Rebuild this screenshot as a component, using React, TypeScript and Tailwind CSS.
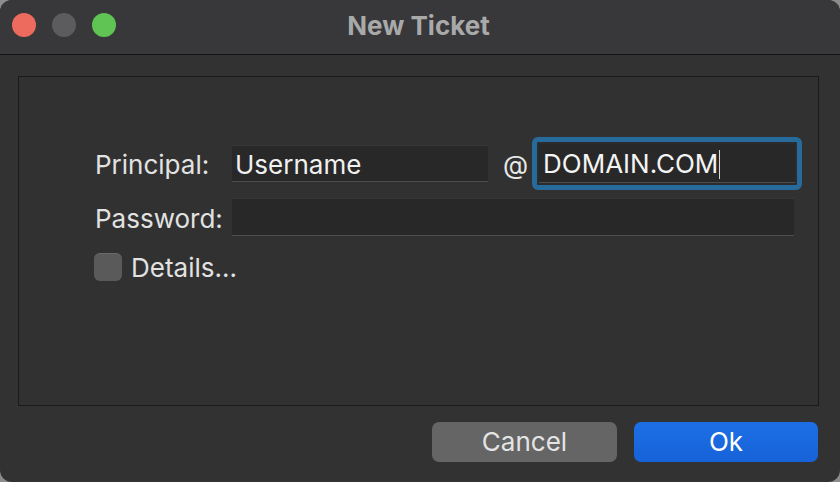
import React from "react";

const font = { fontFamily: "Inter, 'Noto Sans', sans-serif" };

export default function App() {
  return (
    <div className="w-[840px] h-[482px] bg-[#8c8c8c]" style={font}>
      <div className="w-[840px] h-[482px] rounded-[12px] overflow-hidden bg-[#323232] flex flex-col">
        {/* title bar */}
        <div className="h-[55px] shrink-0 bg-[#38383a] border-b border-[#141414] grid grid-cols-[1fr_auto_1fr] items-center pb-[3px]">
          <div className="flex gap-[16px] pl-[12px] -mt-[1px]">
            <span className="w-[24px] h-[24px] rounded-full bg-[#ed6a5e]" />
            <span className="w-[24px] h-[24px] rounded-full bg-[#5c5c5e]" />
            <span className="w-[24px] h-[24px] rounded-full bg-[#5fc454]" />
          </div>
          <div className="text-[26px] leading-[30px] font-bold text-[#a9a9aa] -ml-[3px]">New Ticket</div>
          <div />
        </div>

        {/* body */}
        <div className="flex-1 flex flex-col pl-[18px] pt-[21px]">
          <div className="w-[801px] h-[330px] border border-[#1a1a1a] bg-[#313131] pl-[76px] pt-[60px] text-[26px] leading-[30px] text-[#e2e2e2]">
            <div className="flex items-center">
              <div className="w-[137px] pt-[3px]">Principal:</div>
              <div className="w-[256px] h-[37px] bg-[#282828] border-t border-[#363636] border-b border-b-[#4d4d4d] pl-[3px] pt-[2px] flex items-center text-[#f0f0f0]">
                Username
              </div>
              <div className="ml-[15px] w-[22px] pt-[3px] text-[#e8e8e8]">@</div>
              <div className="ml-[7px] p-[2px] border-[5px] border-[#266b9c] rounded-[6px] bg-[#2c2c2c]">
                <div className="w-[256px] h-[39px] bg-[#282828] border-b border-[#4d4d4d] pl-[4px] pt-[2px] flex items-center text-[#f4f4f4]">
                  DOMAIN.COM
                  <span className="inline-block w-[1px] h-[29px] bg-[#d8d8d8] ml-[1px]" />
                </div>
              </div>
            </div>

            <div className="flex items-center mt-[8px]">
              <div className="w-[137px] pt-[3px]">Password:</div>
              <div className="w-[562px] h-[38px] bg-[#282828] border-t border-[#363636] border-b border-b-[#4d4d4d]" />
            </div>

            <div className="flex items-center mt-[14px] -ml-[1px]">
              <span className="w-[28px] h-[28px] rounded-[6px] bg-[#5a5a5a] border-t border-[#6a6a6a]" />
              <span className="ml-[9px] pt-[3px]">Details...</span>
            </div>
          </div>

          <div className="flex justify-end gap-[17px] mt-[16px] pr-[22px]">
            <button className="w-[185px] h-[40px] rounded-[7px] bg-[#656565] text-[26px] leading-[30px] text-[#e4e4e4]">
              Cancel
            </button>
            <button className="w-[184px] h-[40px] rounded-[7px] bg-gradient-to-b from-[#1d6fe6] to-[#1762d8] text-[26px] leading-[30px] text-white">
              Ok
            </button>
          </div>
        </div>
      </div>
    </div>
  );
}
